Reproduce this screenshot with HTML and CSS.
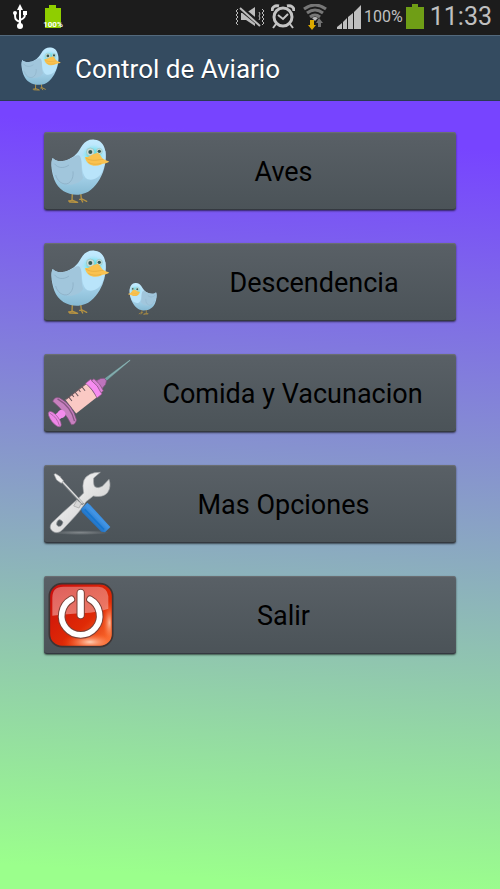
FILE: index.html
```html
<!DOCTYPE html>
<html lang="es">
<head>
  <meta charset="UTF-8" />
  <meta name="viewport" content="width=device-width, initial-scale=1.0" />
  <title>Control de Aviario</title>
  <link rel="stylesheet" href="styles.css">
</head>
<body>
  <!-- shared bird drawing -->
  <svg class="defs" aria-hidden="true">
    <defs>
      <linearGradient id="birdBody" x1="0" y1="0" x2="0" y2="1">
        <stop offset="0" stop-color="#c2ebff" />
        <stop offset="0.6" stop-color="#a9d4ec" />
        <stop offset="1" stop-color="#86bad3" />
      </linearGradient>
      <radialGradient id="birdFace">
        <stop offset="0.4" stop-color="#5ce2ea" />
        <stop offset="1" stop-color="#a5e8fa" stop-opacity="0" />
      </radialGradient>
      <symbol id="bird" viewBox="32 42 177 194">
        <path d="M97 205l-1 21M86 228l13-2 14 6M89 231l20 1M122 204l2 17M119 223l7-1 14 7M124 223l4 8" fill="none" stroke="#b59242" stroke-width="4" stroke-linecap="round" />
        <path d="M38 99C46 110 67 112 88 102C110 92 116 78 127 61C136 48 149 42 164 44C182 45 193 59 196 78C200 103 195 135 179 163C164 188 145 207 116 209C84 211 55 195 43 164C36 145 30 114 38 99Z" fill="url(#birdBody)" />
        <path d="M124 97C125 119 126 156 143 163C161 168 180 157 187 139C197 116 198 91 196 78L170 65Z" fill="#b9e4fa" />
        <path d="M38 99C46 110 67 112 88 102C101 97 107 90 116 91C130 98 121 139 130 158C116 178 94 182 70 177C50 171 42 155 39 143C35 126 33 110 38 99Z" fill="#a1c6dc" />
        <path d="M43 116C53 129 71 132 87 120M47 150C53 174 78 185 91 170C99 161 100 150 99 139" fill="none" stroke="#88abc1" stroke-width="2" />
        <ellipse cx="160" cy="91" rx="36" ry="34" fill="url(#birdFace)" />
        <circle cx="151" cy="81" r="12" fill="#c9dcd8" stroke="#91c4c4" stroke-width="2" />
        <circle cx="178" cy="79" r="9" fill="#c9dcd8" stroke="#91c4c4" stroke-width="2" />
        <circle cx="151" cy="81" r="6" fill="#365c55" />
        <circle cx="178" cy="79" r="5" fill="#365c55" />
        <path d="M135 96C150 98 159 84 172 84C181 85 184 99 190 102C196 106 203 107 208 110C200 116 190 114 182 119C165 127 139 122 135 96Z" fill="#fac250" />
        <path d="M138 99C154 111 176 104 190 103M145 112C158 120 174 118 184 115" fill="none" stroke="#dfa83d" stroke-width="2" />
      </symbol>
    </defs>
  </svg>

  <div class="status-bar">
    <svg class="usb" viewBox="0 0 16 26" aria-label="USB">
      <g fill="none" stroke="#fff" stroke-width="2">
        <path d="M8 4v18M8 18C3 16 3 15 3 9M8 16c5-2 5-3 5-8" />
      </g>
      <path d="M8 0l3 6H5z" fill="#fff" />
      <circle cx="8" cy="22" r="3" fill="#fff" />
      <circle cx="3" cy="9" r="2" fill="#fff" />
      <path d="M11 7h4v4h-4z" fill="#fff" />
    </svg>
    <div class="battery-note">
      <svg viewBox="0 0 16 24" aria-hidden="true"><path d="M0 3h4V0h7v3h5v20H0z" fill="#8fce00" /></svg>
      <span>100%</span>
    </div>
    <svg class="vibrate" viewBox="0 0 30 22" aria-label="Silencio">
      <path d="M6 7h5l9-6v19l-9-6H6z" fill="#bcbcbc" />
      <path d="M4 1l23 19" stroke="#1c1c1c" stroke-width="5" />
      <path d="M5 2l20 18" stroke="#bcbcbc" stroke-width="2" />
      <path d="M3 3l-2 2 2 2-2 2 2 2-2 2 2 2-2 2 2 2M27 3l2 2-2 2 2 2-2 2 2 2-2 2 2 2-2 2M24 6l1 2-1 2 1 2-1 2" fill="none" stroke="#bcbcbc" stroke-width="1" />
    </svg>
    <svg class="alarm" viewBox="0 0 24 26" aria-label="Alarma">
      <circle cx="12" cy="13" r="9" fill="none" stroke="#c4c4c4" stroke-width="3" />
      <path d="M7 11l5 4 5-5M5 20l-3 4M19 20l3 4" fill="none" stroke="#c4c4c4" stroke-width="2" />
      <path d="M1 7c0-4 3-6 7-5M23 7c0-4-3-6-7-5" fill="none" stroke="#c4c4c4" stroke-width="3" />
    </svg>
    <svg class="wifi" viewBox="0 0 24 26" aria-label="Wifi">
      <g fill="none" stroke="#777" stroke-width="3">
        <path d="M1 5Q12-3 23 5M4 9q8-6 16 0M7 13q5-4 10 0" />
      </g>
      <path d="M9 14q3-2 6 0l-3 3z" fill="#bbb" />
      <path d="M7 16h4v5h2l-4 5-4-5h2z" fill="#dba900" />
      <path d="M15 23v-4h-2l3-5 4 5h-2v4z" fill="#727272" />
    </svg>
    <svg class="signal" viewBox="0 0 24 24" aria-label="Cobertura">
      <path d="M0 24v-2l5-4v6zM6 24v-7l4-4v11zM11 24V12l5-4v16zM17 24V7l7-7v24z" fill="#bebebe" />
    </svg>
    <span class="percent">100%</span>
    <svg class="battery" viewBox="0 0 18 25" aria-label="Bateria"><path d="M0 3h6V0h6v3h6v22H0z" fill="#6f9e16" /></svg>
    <time class="clock">11:33</time>
  </div>

  <header class="action-bar">
    <svg class="logo" aria-hidden="true"><use href="#bird" /></svg>
    <h1>Control de Aviario</h1>
  </header>

  <main class="menu">
    <button type="button">
      <svg class="icon" viewBox="12 21 201 234" aria-hidden="true">
        <use href="#bird" x="32" y="42" width="177" height="194" />
      </svg>
      <span>Aves</span>
    </button>

    <button type="button">
      <svg class="icon icon-pair" viewBox="12 21 384 234" aria-hidden="true">
        <use href="#bird" x="32" y="42" width="177" height="194" />
        <use href="#bird" x="0" y="140" width="88" height="97" transform="translate(351 0) scale(-1 1)" />
      </svg>
      <span>Descendencia</span>
    </button>

    <button type="button">
      <svg class="icon icon-wide" viewBox="12 21 255 234" aria-hidden="true">
        <g transform="translate(64 201) rotate(-38)">
          <path d="M168-4L262-2v3L168 5z" fill="#74a3a4" />
          <path d="M180 0h82" stroke="#b3c4c5" stroke-width="1" />
          <path d="M144-14l15 3 9 6v10l-9 7-15 3z" fill="#bd74bc" stroke="#80517c" stroke-width="2" />
          <path d="M36-26h80v52H36z" fill="#fac9c4" />
          <path d="M38-26h76M49-25v14M61-25v8M73-25v14M86-25v8M99-25v14" stroke="#66555c" stroke-width="3" />
          <path d="M114-28h19q10 28 0 56h-19q7-28 0-56z" fill="#f78cf1" stroke="#85547e" stroke-width="2" />
          <path d="M133-23h9q7 23 0 46h-9q7-23 0-46z" fill="#dc83d7" stroke="#85547e" stroke-width="2" />
          <path d="M3-46q14-8 23 5 18 41-1 83-12 10-21 2 9-43-1-90z" fill="#c780bf" stroke="#80507b" stroke-width="2" />
          <path d="M19-43q18 43-1 84" fill="none" stroke="#875783" stroke-width="4" />
          <path d="M-18-10H4v20h-22z" fill="#f78bef" />
          <ellipse cx="1" cy="0" rx="11" ry="12" fill="#f38ced" />
          <ellipse cx="-25" cy="0" rx="11" ry="28" fill="#ee86e7" stroke="#965e91" stroke-width="2" />
          <path d="M-26-24q10 24 0 48" fill="none" stroke="#995f94" stroke-width="2" />
        </g>
      </svg>
      <span>Comida y Vacunacion</span>
    </button>

    <button type="button">
      <svg class="icon" viewBox="12 21 201 234" aria-hidden="true">
        <defs>
          <linearGradient id="steel" x1="0" y1="0" x2="1" y2="1">
            <stop offset="0" stop-color="#fff" />
            <stop offset="1" stop-color="#c5c5c5" />
          </linearGradient>
          <linearGradient id="handle" x1="0" y1="1" x2="1" y2="0">
            <stop offset="0.2" stop-color="#0756a6" />
            <stop offset="0.55" stop-color="#4295e6" />
            <stop offset="1" stop-color="#0a64bc" />
          </linearGradient>
          <radialGradient id="floor">
            <stop offset="0" stop-color="#fff" stop-opacity="0.3" />
            <stop offset="1" stop-color="#fff" stop-opacity="0" />
          </radialGradient>
        </defs>
        <ellipse cx="120" cy="224" rx="88" ry="7" fill="url(#floor)" />
        <path d="M181 43L161 60Q159 83 166 87Q174 92 187 85L207 64Q215 87 202 105Q187 120 160 114L138 131Q122 157 106 174L67 216Q53 229 38 220Q25 210 35 195L70 162L111 125L131 105Q126 81 132 66Q145 42 181 43ZM64 187q-8-6-12 3-6 10 2 15 7 3 13-6 5-7-3-12z" fill="url(#steel)" fill-rule="evenodd" stroke="#a1a5a7" stroke-width="2" />
        <path d="M60 64L129 139" stroke="#777d81" stroke-width="8" />
        <path d="M60 63L128 136" stroke="#dedede" stroke-width="4" />
        <path d="M42 49l5-2 12 8 11 13-6 8-14-10z" fill="#f0f0f0" stroke="#a6a8a9" stroke-width="2" />
        <path d="M101 144l10-17 13 9-7 14z" fill="#d7d7d7" stroke="#a0a0a0" stroke-width="2" />
        <path d="M123 153L142 134Q151 140 158 149L211 207L195 223L184 221L126 163Z" fill="url(#handle)" />
        <path d="M134 154l58 61" stroke="#1676d0" stroke-width="5" />
      </svg>
      <span>Mas Opciones</span>
    </button>

    <button type="button">
      <svg class="icon" viewBox="12 18 201 234" aria-hidden="true">
        <defs>
          <linearGradient id="red" x1="0" y1="0" x2="1" y2="1">
            <stop offset="0" stop-color="#c80c0d" />
            <stop offset="0.6" stop-color="#df2a06" />
            <stop offset="1" stop-color="#ff7d3a" />
          </linearGradient>
          <radialGradient id="glow">
            <stop offset="0" stop-color="#ffd0b5" />
            <stop offset="1" stop-color="#ff4a0a" stop-opacity="0" />
          </radialGradient>
          <linearGradient id="gloss" x1="0" y1="0" x2="0" y2="1">
            <stop offset="0" stop-color="#f5c1bf" stop-opacity="0.45" />
            <stop offset="1" stop-color="#f4aaa6" stop-opacity="0.6" />
          </linearGradient>
          <clipPath id="tile"><rect x="29" y="43" width="185" height="184" rx="34" /></clipPath>
        </defs>
        <rect x="28" y="41" width="190" height="189" rx="38" fill="url(#red)" stroke="#3f3434" stroke-width="5" />
        <g clip-path="url(#tile)">
          <ellipse cx="150" cy="216" rx="85" ry="30" fill="url(#glow)" />
          <ellipse cx="208" cy="158" rx="22" ry="65" fill="url(#glow)" opacity="0.8" />
          <path d="M37 137V83Q37 50 70 50H175Q202 52 205 79V116Q180 126 150 128Q88 131 37 137Z" fill="url(#gloss)" />
        </g>
        <path d="M94 88A57 57 0 1 0 150 88" fill="none" stroke="#7c4137" stroke-width="23" stroke-linecap="round" />
        <path d="M122 69v66" stroke="#7c4137" stroke-width="25" stroke-linecap="round" />
        <path d="M94 88A57 57 0 1 0 150 88" fill="none" stroke="#fff" stroke-width="17" stroke-linecap="round" />
        <path d="M122 69v66" stroke="#fff" stroke-width="19" stroke-linecap="round" />
      </svg>
      <span>Salir</span>
    </button>
  </main>
</body>
</html>
```

FILE: styles.css
```css
* {
  box-sizing: border-box;
}
body {
  margin: 0;
  min-height: 100vh;
  display: flex;
  flex-direction: column;
  font-family: Roboto, sans-serif;
  background-color: #7744ff;
}
.defs {
  position: absolute;
  width: 0;
  height: 0;
}
.status-bar {
  display: flex;
  align-items: center;
  height: 35px;
  padding: 0 8px 2px 12px;
  background-color: #1c1c1c;
  color: #c0c0c0;
}
.usb {
  width: 16px;
  height: 26px;
}
.battery-note {
  position: relative;
  width: 20px;
  height: 24px;
  margin-left: 15px;
  text-align: center;
}
.battery-note svg {
  width: 16px;
  height: 24px;
}
.battery-note span {
  position: absolute;
  left: 0;
  right: 0;
  bottom: 0;
  display: flex;
  justify-content: center;
  font-size: 8px;
  font-weight: bold;
  line-height: 8px;
  color: #fff;
}
.vibrate {
  width: 30px;
  height: 22px;
  margin-left: auto;
}
.alarm {
  width: 24px;
  height: 26px;
  margin-left: 6px;
}
.wifi {
  width: 24px;
  height: 26px;
  margin-left: 8px;
}
.signal {
  width: 24px;
  height: 24px;
  margin-left: 10px;
}
.percent {
  margin-left: 3px;
  font-size: 16px;
}
.battery {
  width: 18px;
  height: 25px;
  margin-left: 3px;
}
.clock {
  margin-left: 6px;
  font-size: 25px;
}
.action-bar {
  display: flex;
  align-items: center;
  gap: 14px;
  height: 66px;
  padding: 2px 21px 0;
  background-color: #344b60;
  border-top: 1px solid #53697c;
  border-bottom: 1px solid #2b3a55;
}
.logo {
  width: 40px;
  height: 44px;
}
h1 {
  margin: 0;
  font-size: 26px;
  font-weight: normal;
  color: #fff;
  text-shadow: 0 1px 1px #1d2c3a;
}
.menu {
  flex: 1;
  display: flex;
  flex-direction: column;
  gap: 33px;
  padding: 31px 44px;
  background: linear-gradient(184deg, #7744ff 6%, #9bff8c 97%);
}
.menu button {
  display: flex;
  align-items: center;
  width: 100%;
  height: 78px;
  padding: 0;
  border: none;
  border-radius: 3px;
  background: linear-gradient(#596066, #4b5358);
  box-shadow: inset 0 1px 1px #6c7074, inset 0 -1px 0 #343940, 0 1px 2px rgba(0, 0, 0, 0.6);
  color: #000;
  font-family: inherit;
  font-size: 27px;
  cursor: pointer;
}
.menu button:active {
  background: #454c51;
}
.menu span {
  flex: 1;
  padding-top: 2px;
  text-align: center;
}
.icon {
  flex: none;
  width: 67px;
  height: 78px;
  overflow: visible;
}
.icon-pair {
  width: 128px;
}
.icon-wide {
  width: 85px;
}
```
